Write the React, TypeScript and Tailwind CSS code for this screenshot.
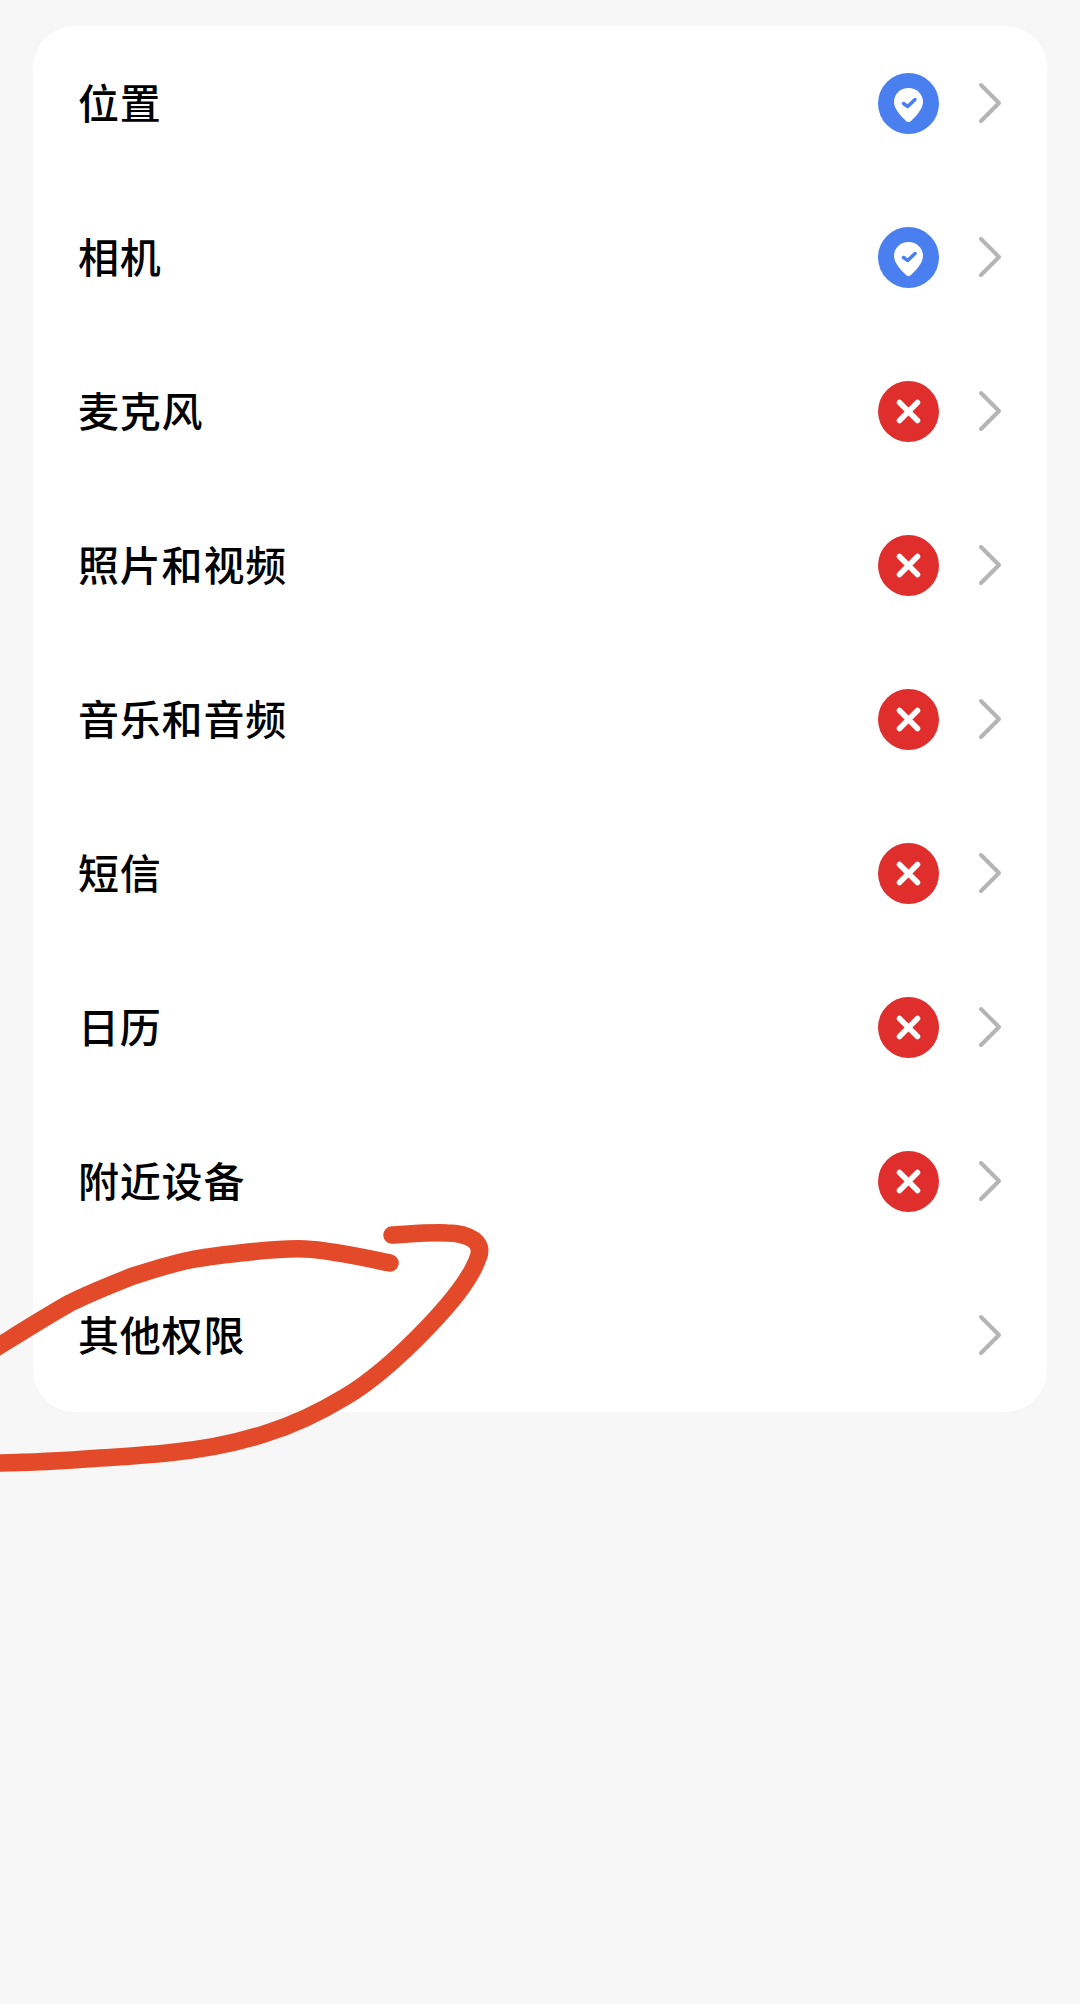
import React from 'react'

// Permission rows, in display order
interface PermissionRow {
  label: string
  status: 'allowed' | 'denied' | 'none'
}

const rows: PermissionRow[] = [
  { label: '位置', status: 'allowed' },
  { label: '相机', status: 'allowed' },
  { label: '麦克风', status: 'denied' },
  { label: '照片和视频', status: 'denied' },
  { label: '音乐和音频', status: 'denied' },
  { label: '短信', status: 'denied' },
  { label: '日历', status: 'denied' },
  { label: '附近设备', status: 'denied' },
  { label: '其他权限', status: 'none' }
]

// Hand-drawn strokes, traced from the picture
const upperStroke =
  'M390 1263C375 1260 332 1250 305 1249C285 1248 258 1251 240 1253C222 1255 205 1257 190 1260C170 1264 152 1270 133 1276C110 1285 90 1293 70 1303C45 1317 20 1333 -14 1354'

const lowerStroke =
  'M392 1235C410 1234 432 1232 447 1233C458 1233 468 1236 474 1240C480 1245 481 1251 478 1258C470 1281 448 1306 427 1328C402 1354 374 1380 345 1397C320 1412 293 1425 267 1433C234 1444 200 1450 167 1453C145 1455 122 1457 100 1458C60 1461 25 1463 -14 1463'

const AllowedIcon = () => (
  <div className="w-[61px] h-[61px] rounded-full bg-[#4a7ff0] flex items-center justify-center">
    <svg width="61" height="61" viewBox="0 0 61 61">
      <path d="M30.500 15C38.500 15 45 21 45 29C45 36 38 43 33 48C31.500 49.500 29.500 49.500 28 48C23 43 16 36 16 29C16 21 22.500 15 30.500 15Z" fill="#ffffff" />
      <path d="M25.500 30.500L29.700 33.500L37 26.500" fill="none" stroke="#4a7ff0" strokeWidth="3.500" strokeLinecap="round" strokeLinejoin="round" />
    </svg>
  </div>
)

const DeniedIcon = () => (
  <div className="w-[61px] h-[61px] rounded-full bg-[#e02e2c] flex items-center justify-center">
    <svg width="61" height="61" viewBox="0 0 61 61">
      <path d="M21.500 21.500L39.500 39.500M39.500 21.500L21.500 39.500" fill="none" stroke="#ffffff" strokeWidth="5.500" strokeLinecap="round" />
    </svg>
  </div>
)

const Chevron = () => (
  <svg width="24" height="42" viewBox="0 0 24 42" className="ml-[39px]">
    <path d="M3 3L21 21L3 39" fill="none" stroke="#b5b5b5" strokeWidth="4" strokeLinecap="round" strokeLinejoin="round" />
  </svg>
)

const App = () => {
  return (
    <div className="relative w-[1080px] h-[2004px] overflow-hidden bg-[#f7f7f7] pt-[26px] px-[33px] font-['Noto_Sans_CJK_SC',sans-serif]">
      {/* Permissions card */}
      <div className="bg-white rounded-[42px] h-[1386px] flex flex-col">
        {rows.map((row) => (
          <div key={row.label} className="flex-1 flex items-center pl-[45px] pr-[45px]">
            <span className="flex-1 pb-[3px] text-[41px] leading-none tracking-[0.8px] font-medium text-black">{row.label}</span>
            {row.status === 'allowed' && <AllowedIcon />}
            {row.status === 'denied' && <DeniedIcon />}
            <Chevron />
          </div>
        ))}
      </div>

      {/* Hand-drawn annotation on top of the card */}
      <svg className="absolute left-0 top-0" width="1080" height="2004" viewBox="0 0 1080 2004">
        <path d={upperStroke} fill="none" stroke="#e34a2a" strokeWidth="17.500" strokeLinecap="round" />
        <path d={lowerStroke} fill="none" stroke="#e34a2a" strokeWidth="17.500" strokeLinecap="round" />
      </svg>
    </div>
  )
}

export default App
